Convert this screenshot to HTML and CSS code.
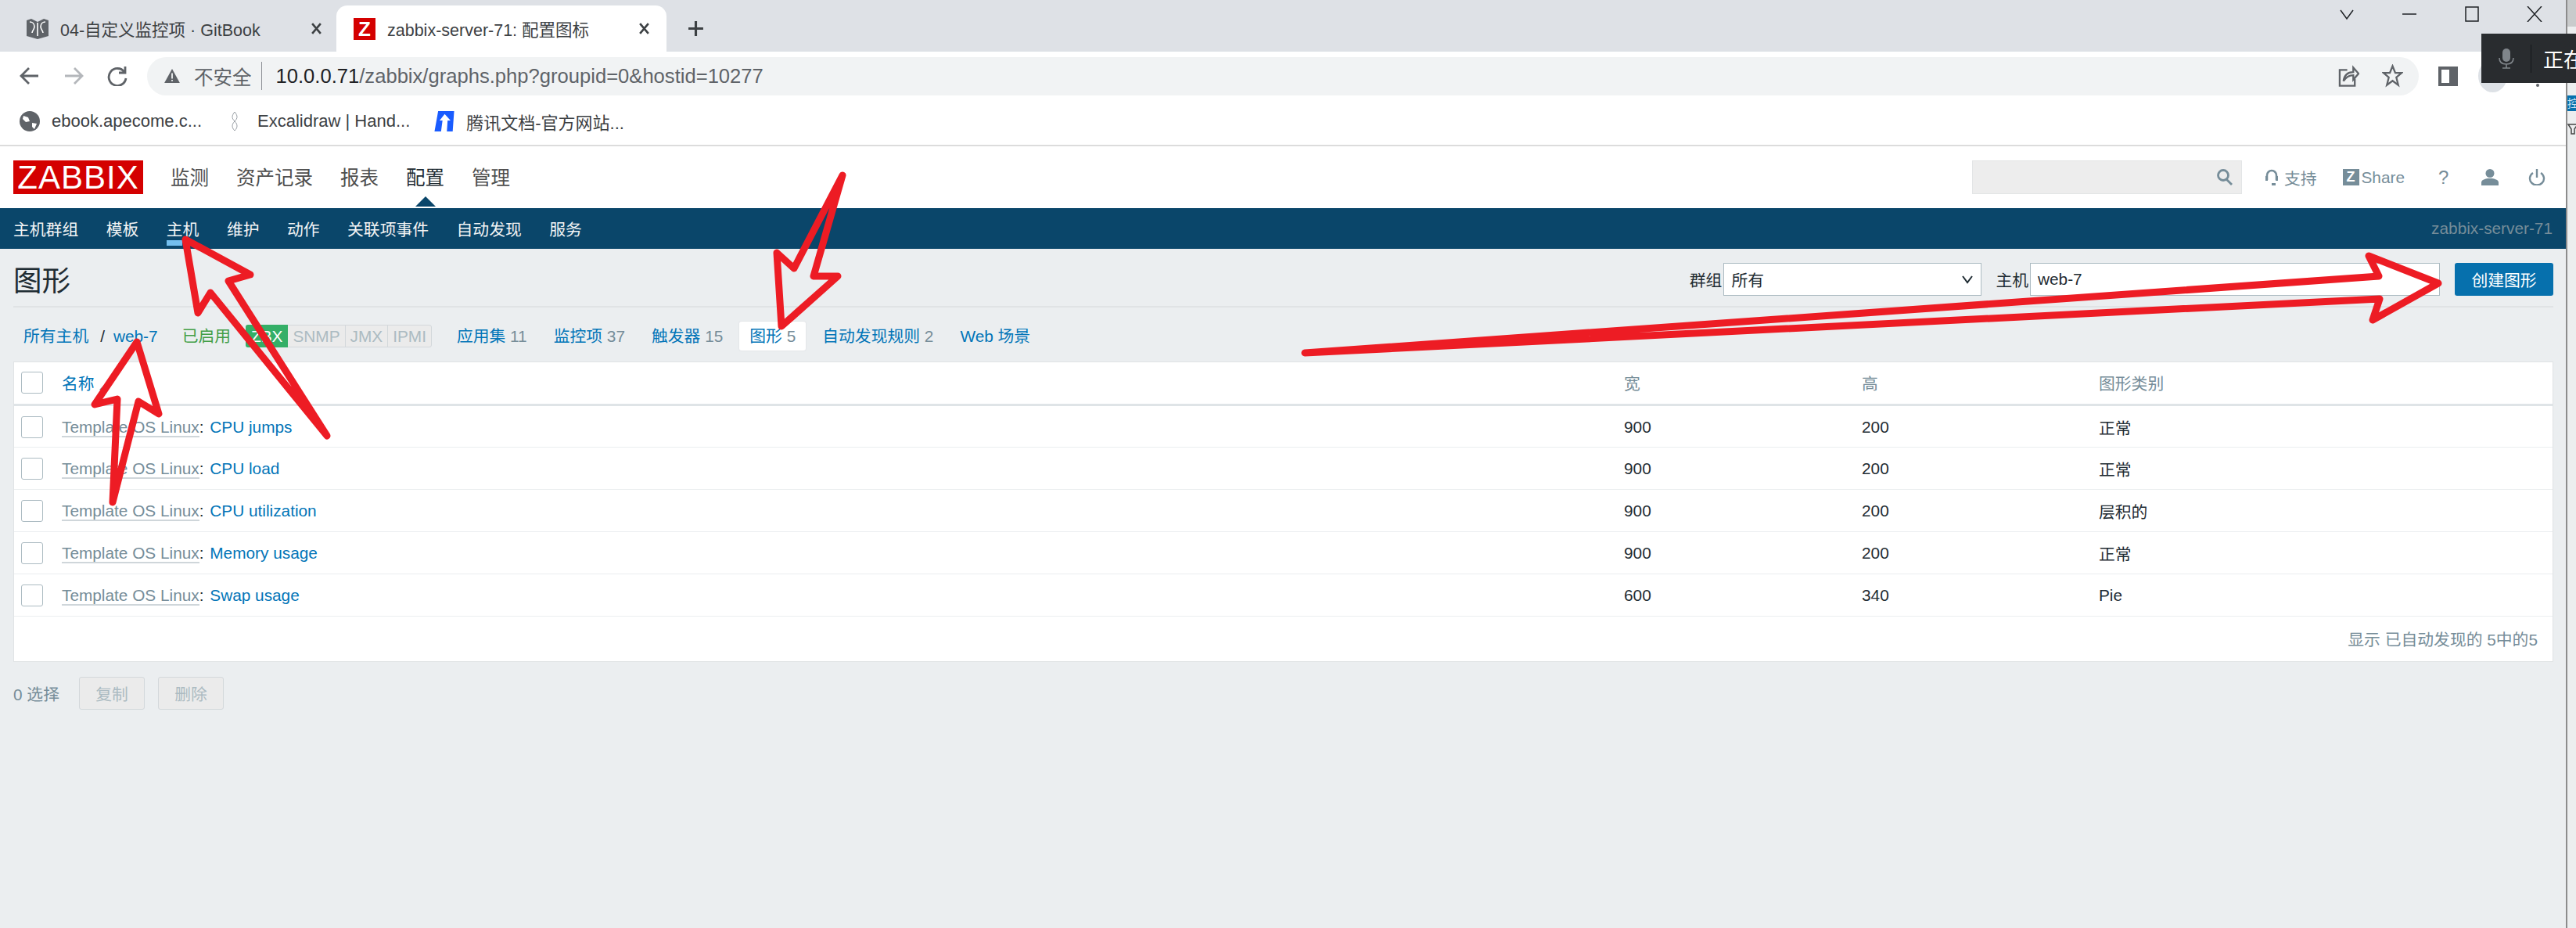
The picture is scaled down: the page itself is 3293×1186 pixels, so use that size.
FILE: index.html
```html
<!DOCTYPE html>
<html lang="zh">
<head>
<meta charset="utf-8">
<title>zabbix-server-71: 配置图标</title>
<link rel="stylesheet" href="styles.css">
</head>
<body>
<div class="screen">
  <div class="browser">
    <div class="tabstrip">
      <div class="tab">
        <svg class="fav-book" viewBox="0 0 28 26"><path class="book-fill" d="M0 2l6-2 8 4 8-4 6 2v20l-14 4-14-4z"/><path class="book-line" d="M14 5v17M4 4c3 0 6 2 6 6s-3 5-3 8M24 4c-3 0-6 2-6 6s3 5 3 8"/></svg>
        <span class="tab-title">04-自定义监控项 · GitBook</span>
        <svg class="tab-x" viewBox="0 0 14 14"><path d="M2 1l10 12M12 1L2 13"/></svg>
      </div>
      <div class="tab tab-active">
        <span class="fav-z">Z</span>
        <span class="tab-title">zabbix-server-71: 配置图标</span>
        <svg class="tab-x" viewBox="0 0 14 14"><path d="M2 1l10 12M12 1L2 13"/></svg>
      </div>
      <svg class="tab-plus" viewBox="0 0 20 20"><path d="M10 1v18M1 10h18"/></svg>
      <div class="winctl">
        <svg viewBox="0 0 20 20"><path d="M2 5l8 11 8-11"/></svg>
        <svg viewBox="0 0 20 20"><path d="M1 10h18"/></svg>
        <svg viewBox="0 0 20 20"><path d="M2 1h16v18H2z"/></svg>
        <svg viewBox="0 0 20 20"><path d="M1 0l18 20M19 0L1 20"/></svg>
      </div>
    </div>
    <div class="toolbar">
      <svg class="tb-ico" viewBox="0 0 26 26"><path d="M24 13H3M12 3L2 13l10 10"/></svg>
      <svg class="tb-ico tb-off" viewBox="0 0 26 26"><path d="M2 13h21M14 3l10 10-10 10"/></svg>
      <svg class="tb-ico" viewBox="0 0 26 26"><path d="M22 8a11 11 0 1 0 2 8M23 1v8h-8"/></svg>
      <div class="omnibox">
        <svg class="warn" viewBox="0 0 22 20"><path d="M11 0l11 20H0z"/><path class="warn-mark" d="M11 6v8M11 15.5v2"/></svg>
        <span class="insecure">不安全</span>
        <span class="omni-sep"></span>
        <span class="url"><b>10.0.0.71</b>/zabbix/graphs.php?groupid=0&amp;hostid=10277</span>
        <svg class="omni-ico" viewBox="0 0 28 30"><path d="M12 7H2v21h20v-9M7 22c1-8 6-12 13-12V4l7 8-7 8v-6c-6 0-10 3-13 8z"/></svg>
        <svg class="omni-ico" viewBox="0 0 28 30"><path d="M14 2l3.600 9H26l-7 6 2.500 10L14 21.500 6.500 27 9 17l-7-6h8.400z"/></svg>
      </div>
      <svg class="panel-ico" viewBox="0 0 25 25"><path d="M0 0h25v25H0zM4 4v17h10V4z"/></svg>
      <span class="avatar"></span>
      <span class="kebab"></span>
    </div>
    <div class="bookmarks">
      <span class="bm bm-first"><svg class="bm-ico" viewBox="0 0 26 26"><circle class="globe" cx="13" cy="13" r="13"/><path class="globe-cut" d="M5 6l6 2 2 5-5 1-4-4zM16 15l6 1-3 7-3-3z"/></svg><span>ebook.apecome.c...</span></span>
      <span class="bm"><svg class="bm-ico bm-ex" viewBox="0 0 12 26"><path d="M6 1c4 5 4 8 0 12S2 21 6 25M6 1C2 6 2 9 6 13s4 8 0 12"/></svg><span>Excalidraw | Hand...</span></span>
      <span class="bm"><svg class="bm-ico" viewBox="0 0 27 28"><path class="tx-a" d="M5 0h22l-2 28h-8l1-15h4l-8-9-7 9h4l-2 15H0z"/></svg><span>腾讯文档-官方网站...</span></span>
    </div>
    <header class="topbar">
      <div class="logo">ZABBIX</div>
      <nav class="mainmenu">
        <a>监测</a><a>资产记录</a><a>报表</a><a class="current">配置</a><a>管理</a>
      </nav>
      <div class="top-right">
        <div class="searchbox">
          <svg class="ico-search" viewBox="0 0 22 21"><circle cx="9" cy="8" r="6.500"/><path d="M13 13l7 7"/></svg>
        </div>
        <span class="tl tl-support"><svg viewBox="0 0 18 21"><path d="M3 14V8a6 6 0 0 1 12 0v6"/><path class="solid" d="M1 9h3v6H1zM14 9h3v6h-3zM9 18h5v3H9z"/></svg>支持</span>
        <span class="tl tl-share"><span class="zbox">Z</span>Share</span>
        <span class="tl tl-q">?</span>
        <svg class="tl-user" viewBox="0 0 22 21"><ellipse cx="11" cy="5.500" rx="5.500" ry="5.500"/><path d="M0 21v-4c0-3 5-5 11-5s11 2 11 5v4z"/></svg>
        <svg class="tl-power" viewBox="0 0 22 21"><path d="M6 5a9 8.500 0 1 0 10 0M11 0v11"/></svg>
      </div>
    </header>
    <nav class="submenu">
      <a>主机群组</a><a>模板</a><a class="selected">主机</a><a>维护</a><a>动作</a><a>关联项事件</a><a>自动发现</a><a>服务</a>
      <span class="server">zabbix-server-71</span>
    </nav>
    <main class="content">
      <div class="titlerow">
        <h1>图形</h1>
        <form class="filter">
          <label>群组</label>
          <div class="select"><span>所有</span><svg viewBox="0 0 16 12"><path d="M2 2l6 8 6-8"/></svg></div>
          <label>主机</label>
          <div class="hostinput">web-7</div>
          <button type="button" class="primary">创建图形</button>
        </form>
      </div>
      <div class="hostnav">
        <a class="item">所有主机</a><span class="slash">/</span><a class="item crumb">web-7</a>
        <span class="item enabled">已启用</span>
        <span class="tags"><span class="tag on">ZBX</span><span class="tag">SNMP</span><span class="tag">JMX</span><span class="tag">IPMI</span></span>
        <span class="item"><a>应用集</a> <i>11</i></span>
        <span class="item"><a>监控项</a> <i>37</i></span>
        <span class="item"><a>触发器</a> <i>15</i></span>
        <span class="item active"><a>图形</a> <i>5</i></span>
        <span class="item"><a>自动发现规则</a> <i>2</i></span>
        <span class="item"><a>Web 场景</a></span>
      </div>
      <div class="card">
        <table>
          <colgroup><col class="c-check"><col class="c-name"><col class="c-w"><col class="c-h"><col></colgroup>
          <thead>
            <tr><th><span class="check"></span></th><th><a>名称</a><span class="sort"></span></th><th>宽</th><th>高</th><th>图形类别</th></tr>
          </thead>
          <tbody>
            <tr><td><span class="check"></span></td><td><a class="tpl">Template OS Linux</a>: <a>CPU jumps</a></td><td>900</td><td>200</td><td>正常</td></tr>
            <tr><td><span class="check"></span></td><td><a class="tpl">Template OS Linux</a>: <a>CPU load</a></td><td>900</td><td>200</td><td>正常</td></tr>
            <tr><td><span class="check"></span></td><td><a class="tpl">Template OS Linux</a>: <a>CPU utilization</a></td><td>900</td><td>200</td><td>层积的</td></tr>
            <tr><td><span class="check"></span></td><td><a class="tpl">Template OS Linux</a>: <a>Memory usage</a></td><td>900</td><td>200</td><td>正常</td></tr>
            <tr><td><span class="check"></span></td><td><a class="tpl">Template OS Linux</a>: <a>Swap usage</a></td><td>600</td><td>340</td><td>Pie</td></tr>
          </tbody>
        </table>
        <div class="paging">显示 已自动发现的 5中的5</div>
      </div>
      <div class="actions">
        <span class="count">0 选择</span>
        <button type="button" disabled>复制</button>
        <button type="button" disabled>删除</button>
      </div>
    </main>
  </div>
  <aside class="behind">
    <div class="behind-top"></div>
    <div class="behind-blue">控项</div>
    <svg class="behind-filter" viewBox="0 0 14 14"><path d="M1 1h12L9 7v6H5V7z"/></svg>
  </aside>

  <div class="mic-pop">
    <svg viewBox="0 0 20 26"><rect class="mic-body" x="5" y="0" width="10" height="17" rx="5"/><path d="M1 12c0 6 4 8 9 8s9-2 9-8M10 20v5M5 25h10"/></svg>
    <span class="mic-sep"></span>
    <span class="mic-text">正在</span>
  </div>

  <svg class="annotations" viewBox="0 0 3293 1186">
    <polygon points="1668,451 3041,353 3028,327 3117,362 3033,409 3042,382"/>
    <polygon points="237,306 320,351 292,359 418,557 269,374 253,400"/>
    <polygon points="175,437 203,529 177,513 144,642 150,510 121,517"/>
    <polygon points="1077,224 1040,353 1071,353 999,417 993,323 1015,343"/>
  </svg>
</div>
</body>
</html>
```
FILE: styles.css
```css
* { box-sizing: border-box; }
html, body { margin: 0; padding: 0; }
body {
  background: #ebeef0;
  font-family: "Liberation Sans", "Noto Sans CJK SC", sans-serif;
  font-size: 20.8px;
  color: #1f2c33;
  overflow: hidden;
}
a { color: #0275b8; text-decoration: none; }
button { font-family: inherit; }

.screen {
  position: relative;
  width: 3293px;
  height: 1186px;
  display: flex;
  overflow: hidden;
}
.browser { width: 3280px; flex: none; display: flex; flex-direction: column; height: 100%; }

/* tab strip */
.tabstrip {
  height: 66px;
  flex: none;
  background: #dee1e6;
  display: flex;
  align-items: flex-end;
  position: relative;
  color: #3c4043;
}
.tab {
  width: 422px;
  height: 59px;
  display: flex;
  align-items: center;
  padding: 0 18px 0 34px;
  position: relative;
}
.tab:first-child { width: 430px; }
.tab-active {
  width: 422px;
  background: #fff;
  border-radius: 14px 14px 0 0;
  padding: 0 21px 0 22px;
}
.tab-title { margin-left: 15px; font-size: 21.500px; flex: 1; white-space: nowrap; }
.fav-book { width: 28px; height: 26px; flex: none; }
.book-fill { fill: #5f6368; }
.book-line { fill: none; stroke: #fff; stroke-width: 1.600; }
.fav-z {
  width: 28px; height: 28px; flex: none;
  background: #d40000; color: #fff;
  font-weight: 700; font-size: 26px; line-height: 28px; text-align: center;
}
.tab-x { width: 15px; height: 15px; flex: none; }
.tab-x path { fill: none; stroke: #3c4043; stroke-width: 2.400; }
.tab-plus { width: 21px; height: 21px; flex: none; margin: 0 0 19px 27px; }
.tab-plus path { fill: none; stroke: #3c4043; stroke-width: 3; }
.winctl {
  position: absolute;
  top: 8px; right: 30px;
  display: flex;
  gap: 60px;
}
.winctl svg { width: 20px; height: 20px; }
.winctl path { fill: none; stroke: #1f2226; stroke-width: 1.500; }

/* toolbar */
.toolbar {
  height: 62px;
  flex: none;
  background: #fff;
  display: flex;
  align-items: center;
  padding: 0 0 0 25px;
  gap: 30px;
}
.tb-ico { width: 26px; height: 26px; flex: none; }
.tb-ico path { fill: none; stroke: #5f6368; stroke-width: 2.800; }
.tb-off path { stroke: #b4b7bb; }
.omnibox {
  width: 2904px;
  height: 49px;
  margin-left: -5px;
  flex: none;
  background: #f1f3f4;
  border-radius: 25px;
  display: flex;
  align-items: center;
  padding: 0 20px 0 22px;
}
.warn { width: 20px; height: 18px; flex: none; }
.warn > path:first-child { fill: #5f6368; }
.warn-mark { fill: none; stroke: #f1f3f4; stroke-width: 2; }
.insecure { margin-left: 18px; font-size: 24.500px; color: #5f6368; }
.omni-sep { width: 1px; height: 36px; background: #8b8f94; margin: 0 18px 0 12px; }
.url { font-size: 25.600px; color: #5f6368; flex: 1; white-space: nowrap; }
.url b { font-weight: 400; color: #202124; }
.omni-ico { width: 27px; height: 30px; flex: none; margin-left: 29px; }
.omni-ico path { fill: none; stroke: #5f6368; stroke-width: 2.400; }
.panel-ico { width: 25px; height: 25px; flex: none; margin-left: -5px; }
.panel-ico path { fill: #5f6368; fill-rule: evenodd; }
.avatar {
  width: 37px;
  height: 42px;
  border-radius: 50%;
  background: #dde1e6;
  flex: none;
  margin-left: -4px;
  position: relative;
  overflow: hidden;
}
.avatar::after {
  content: "";
  position: absolute;
  left: 8px;
  top: 0;
  width: 21px;
  height: 22px;
  background: #4d5a75;
}
.kebab { width: 4px; height: 4px; border-radius: 50%; background: #5f6368; flex: none; margin: 24px 0 0 7px; }

/* bookmarks */
.bookmarks {
  height: 59px;
  flex: none;
  background: #fff;
  border-bottom: 2px solid #dcdcdc;
  display: flex;
  align-items: center;
  padding: 0 0 3px 25px;
  gap: 31px;
  font-size: 22px;
  color: #3c4043;
}
.bm { display: flex; align-items: center; gap: 15px; white-space: nowrap; }
.bm-first { margin-right: 5px; }
.bm-ico { width: 26px; height: 26px; flex: none; }
.globe { fill: #5f6368; }
.globe-cut { fill: #fff; }
.bm-ex { width: 12px; margin-right: 8px; }
.bm-ex path { fill: none; stroke: #9aa0a6; stroke-width: 1; }
.tx-a { fill: #1a5cff; }

/* zabbix top bar */
.topbar {
  height: 79px;
  flex: none;
  background: #fff;
  display: flex;
  padding: 18px 0 0 17px;
}
.logo {
  width: 166px;
  height: 43px;
  background: #d40000;
  color: #fff;
  font-size: 42px;
  line-height: 43px;
  text-align: center;
  letter-spacing: 1px;
}
.mainmenu { display: flex; gap: 35px; margin-left: 35px; height: 43px; align-items: center; padding-bottom: 3px; font-size: 24.500px; }
.mainmenu a { color: #4f4f4f; position: relative; }
.mainmenu a.current { color: #1f2c33; }
.mainmenu a.current::after {
  content: "";
  position: absolute;
  left: 50%;
  top: 43px;
  margin-left: -13px;
  border: 13px solid transparent;
  border-top: 0;
  border-bottom-color: #0a466a;
}
.top-right { margin-left: auto; display: flex; height: 43px; align-items: center; padding-right: 26px; color: #768d99; }
.searchbox {
  width: 345px;
  height: 43px;
  background: #ededed;
  border: 1px solid #e3e5e6;
  display: flex;
  align-items: center;
  justify-content: flex-end;
  padding-right: 10px;
}
.ico-search { width: 22px; height: 21px; }
.ico-search circle, .ico-search path { fill: none; stroke: #768d99; stroke-width: 2.800; }
.tl { display: flex; align-items: center; white-space: nowrap; }
.tl-support { margin-left: 29px; gap: 7px; }
.tl-support svg { width: 18px; height: 21px; }
.tl-support path { fill: none; stroke: #768d99; stroke-width: 2.500; }
.tl-support path.solid { fill: #768d99; stroke: none; }
.tl-share { margin-left: 33px; gap: 3px; }
.zbox {
  width: 21px; height: 21px;
  background: #768d99; color: #fff;
  font-weight: 700; font-size: 18px; line-height: 21px; text-align: center;
}
.tl-q { margin-left: 43px; font-size: 24px; width: 13px; }
.tl-user { width: 22px; height: 21px; margin-left: 42px; fill: #768d99; }
.tl-power { width: 22px; height: 21px; margin-left: 38px; }
.tl-power path { fill: none; stroke: #768d99; stroke-width: 2.400; }

/* sub menu */
.submenu {
  height: 52px;
  flex: none;
  background: #0a466a;
  display: flex;
  align-items: center;
  gap: 35.500px;
  padding: 0 17px;
  font-size: 20.800px;
}
.submenu a { color: #f2f4f5; position: relative; }
.submenu a.selected::after {
  content: "";
  position: absolute;
  left: 0;
  top: 30px;
  width: 20px;
  height: 7px;
  background: #73bfee;
}
.server { margin-left: auto; color: #768d99; }

/* content */
.content { flex: 1; padding: 0 16px 0 17px; }
.titlerow {
  height: 75px;
  padding-top: 18px;
  border-bottom: 2px solid #e0e3e5;
  display: flex;
  justify-content: space-between;
}
h1 { margin: 0; padding-top: 3px; font-size: 36.500px; font-weight: 400; line-height: 42px; }
.filter { display: flex; height: 42px; align-items: center; }
.filter label { margin-right: 2px; }
.select, .hostinput {
  height: 42px;
  background: #fff;
  border: 1px solid #acbbc2;
  display: flex;
  align-items: center;
  padding: 0 9px;
}
.select { width: 330px; margin-right: 18px; justify-content: space-between; }
.select svg { width: 16px; height: 12px; }
.select path { fill: none; stroke: #1f2c33; stroke-width: 2; }
.hostinput { width: 524px; }
.primary {
  width: 126px;
  height: 42px;
  margin-left: 19px;
  background: #0670ad;
  color: #fff;
  border: 0;
  border-radius: 3px;
  font-size: 20.800px;
}

.hostnav { height: 69px; display: flex; align-items: center; gap: 8px; padding-top: 4px; }
.item { padding: 0 13px; white-space: nowrap; height: 37px; line-height: 37px; }
.item i { font-style: normal; color: #768d99; }
.slash { margin: 0 0 0 -6px; color: #1f2c33; }
.crumb { margin-left: -10px; }
.enabled { color: #429e47; margin-left: -3px; }
.tags { display: flex; height: 29px; margin: 0 11px 0 -2px; border: 1px solid #d3d8db; border-radius: 3px; background: #ebebeb; }
.tag {
  padding: 0 6px;
  line-height: 27px;
  color: #acbbc2;
  border-right: 1px solid #d3d8db;
}
.tag:last-child { border-right: 0; }
.tag.on { background: #34af67; color: #fff; border-right: 0; border-radius: 3px 0 0 3px; margin: -1px 0 -1px -1px; line-height: 29px; padding: 0 7px; }
.item.active { background: #fff; border-radius: 3px; box-shadow: 0 0 0 1px #e4e7e9; }

.card { background: #fff; border: 1px solid #e0e3e5; }
table { width: 100%; table-layout: fixed; border-collapse: collapse; }
.c-check { width: 61px; }
.c-name { width: 1997px; }
.c-w { width: 304px; }
.c-h { width: 303px; }
th { height: 54px; font-weight: 400; text-align: left; color: #768d99; border-bottom: 3px solid #dfe4e7; padding: 0; }
td { height: 54px; border-bottom: 1px solid #ebeef0; padding: 2px 0 0; }
.check {
  display: block;
  width: 28px;
  height: 28px;
  margin-left: 9px;
  background: #fff;
  border: 1px solid #acbbc2;
  border-radius: 3px;
}
.sort {
  display: inline-block;
  margin-left: 6px;
  border-left: 7px solid transparent;
  border-bottom: 7px solid #768d99;
}
.tpl { color: #768d99; border-bottom: 2px solid #cfd6da; }
.tpl ~ a { margin-left: 2px; }
.paging { height: 57px; display: flex; align-items: center; justify-content: flex-end; padding-right: 19px; color: #768d99; }
.actions { display: flex; align-items: center; height: 42px; margin-top: 19px; color: #768d99; }
.count { width: 84px; }
.actions button {
  width: 84px;
  height: 42px;
  margin-right: 17px;
  background: #ebebeb;
  color: #acbbc2;
  border: 1px solid #d3d8db;
  border-radius: 3px;
  font-size: 20.800px;
}

/* the window behind */
.behind {
  width: 13px;
  flex: none;
  background: #eceeef;
  border-left: 2px solid #8c8c8c;
  position: relative;
  overflow: hidden;
}
.behind-top { height: 34px; background: #c9cbcc; }
.behind-blue {
  margin-top: 88px;
  height: 20px;
  background: #0670ad;
  color: #cfe4f2;
  font-size: 14px;
  line-height: 20px;
  white-space: nowrap;
}
.behind-filter { width: 14px; height: 14px; margin-top: 16px; display: block; }
.behind-filter path { fill: none; stroke: #444; stroke-width: 1.500; }

/* overlays */
.mic-pop {
  position: absolute;
  left: 3172px;
  top: 43px;
  width: 121px;
  height: 63px;
  background: #292c2f;
  display: flex;
  align-items: center;
  padding-left: 22px;
  color: #fff;
}
.mic-pop svg { width: 20px; height: 26px; flex: none; }
.mic-pop path { fill: none; stroke: #80868b; stroke-width: 1.600; }
.mic-body { fill: #80868b; }
.mic-sep { width: 1px; height: 36px; background: #151719; margin: 0 15px 0 21px; flex: none; }
.mic-text { font-size: 26px; white-space: nowrap; }

.annotations {
  position: absolute;
  left: 0; top: 0;
  width: 3293px;
  height: 1186px;
  pointer-events: none;
}
.annotations polygon {
  fill: none;
  stroke: #ed1c24;
  stroke-width: 9;
  stroke-linejoin: round;
}
```
